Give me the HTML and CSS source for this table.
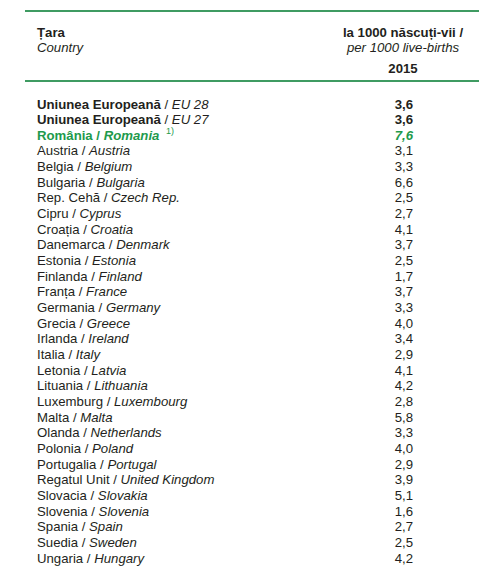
FILE: index.html
```html
<!DOCTYPE html>
<html lang="ro">
<head>
    <meta charset="UTF-8">
    <meta name="viewport" content="width=device-width, initial-scale=1.0">
    <title>Mortalitatea infantilă</title>
    <link rel="stylesheet" href="styles.css">
</head>
<body>
    <div class="tabel">
        <div class="antet">
            <div class="col-tara">
                <strong>Țara</strong>
                <em>Country</em>
            </div>
            <div class="col-valoare">
                <strong>la 1000 născuți-vii /</strong>
                <em>per 1000 live-births</em>
                <strong class="an">2015</strong>
            </div>
        </div>

        <div class="corp">
            <div class="rand total"><span><b>Uniunea Europeană</b> / <em>EU 28</em></span><b>3,6</b></div>
            <div class="rand total"><span><b>Uniunea Europeană</b> / <em>EU 27</em></span><b>3,6</b></div>
            <div class="rand romania"><span>România / <em>Romania</em> <sup>1)</sup></span><em>7,6</em></div>
            <div class="rand"><span>Austria / <em>Austria</em></span><span>3,1</span></div>
            <div class="rand"><span>Belgia / <em>Belgium</em></span><span>3,3</span></div>
            <div class="rand"><span>Bulgaria / <em>Bulgaria</em></span><span>6,6</span></div>
            <div class="rand"><span>Rep. Cehă / <em>Czech Rep.</em></span><span>2,5</span></div>
            <div class="rand"><span>Cipru / <em>Cyprus</em></span><span>2,7</span></div>
            <div class="rand"><span>Croația / <em>Croatia</em></span><span>4,1</span></div>
            <div class="rand"><span>Danemarca / <em>Denmark</em></span><span>3,7</span></div>
            <div class="rand"><span>Estonia / <em>Estonia</em></span><span>2,5</span></div>
            <div class="rand"><span>Finlanda / <em>Finland</em></span><span>1,7</span></div>
            <div class="rand"><span>Franța / <em>France</em></span><span>3,7</span></div>
            <div class="rand"><span>Germania / <em>Germany</em></span><span>3,3</span></div>
            <div class="rand"><span>Grecia / <em>Greece</em></span><span>4,0</span></div>
            <div class="rand"><span>Irlanda / <em>Ireland</em></span><span>3,4</span></div>
            <div class="rand"><span>Italia / <em>Italy</em></span><span>2,9</span></div>
            <div class="rand"><span>Letonia / <em>Latvia</em></span><span>4,1</span></div>
            <div class="rand"><span>Lituania / <em>Lithuania</em></span><span>4,2</span></div>
            <div class="rand"><span>Luxemburg / <em>Luxembourg</em></span><span>2,8</span></div>
            <div class="rand"><span>Malta / <em>Malta</em></span><span>5,8</span></div>
            <div class="rand"><span>Olanda / <em>Netherlands</em></span><span>3,3</span></div>
            <div class="rand"><span>Polonia / <em>Poland</em></span><span>4,0</span></div>
            <div class="rand"><span>Portugalia / <em>Portugal</em></span><span>2,9</span></div>
            <div class="rand"><span>Regatul Unit / <em>United Kingdom</em></span><span>3,9</span></div>
            <div class="rand"><span>Slovacia / <em>Slovakia</em></span><span>5,1</span></div>
            <div class="rand"><span>Slovenia / <em>Slovenia</em></span><span>1,6</span></div>
            <div class="rand"><span>Spania / <em>Spain</em></span><span>2,7</span></div>
            <div class="rand"><span>Suedia / <em>Sweden</em></span><span>2,5</span></div>
            <div class="rand"><span>Ungaria / <em>Hungary</em></span><span>4,2</span></div>
        </div>
    </div>
</body>
</html>
```
FILE: styles.css
```css
body {
    font-family: "Liberation Sans", Arial, sans-serif;
    font-size: 13.2px;
    color: #231f20;
    background-color: #ffffff;
    margin: 0;
}

.tabel {
    margin: 10px 0 0 25px;
}

/* Antetul cu linii verzi sus si jos */
.antet {
    display: flex;
    justify-content: space-between;
    border-top: 2px solid #3f9b62;
    border-bottom: 2px solid #3f9b62;
    padding: 14px 14px 3px 12px;
    line-height: 14.5px;
}

.antet strong,
.antet em {
    display: block;
}

.col-valoare {
    width: 124px;
    text-align: center;
}

.an {
    margin-top: 7px;
}

.corp {
    padding: 15px 66px 0 12px;
}

.rand {
    display: flex;
    justify-content: space-between;
    line-height: 15.65px;
}

.romania {
    color: #1e9a4c;
    font-weight: bold;
}

sup {
    font-size: 9px;
    font-weight: normal;
    line-height: 0;
    margin-left: 3px;
}
```
